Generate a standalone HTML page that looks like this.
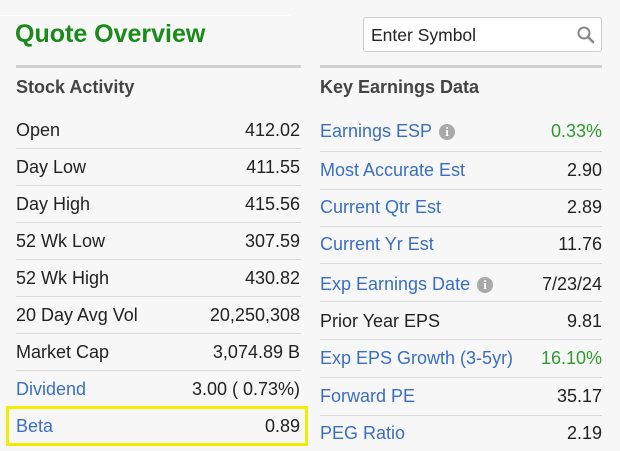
<!DOCTYPE html>
<html><head><style>
body{margin:0;width:620px;height:451px;background:#f7f7f7;font-family:"Liberation Sans",sans-serif;position:relative;overflow:hidden}
.a{position:absolute;white-space:nowrap;font-size:18px;line-height:20px;color:#222}
.l{color:#3a6fc0}
.g{color:#2e9a2e}
.r{text-align:right}
.s{position:absolute;height:1px;background:#d8d8d8}
.i{display:inline-block;width:16px;height:16px;border-radius:50%;background:#a9a9a9;color:#fff;font-size:13px;line-height:16px;text-align:center;font-weight:bold;vertical-align:1px;margin-left:7px;font-family:"Liberation Serif",serif}
</style></head><body>
<div style="position:absolute;left:0;top:15px;width:290px;height:1px;background:#fff"></div>
<div class="a" style="left:15px;top:20px;font-size:25px;line-height:28px;font-weight:bold;color:#1a8a1a">Quote Overview</div>
<div style="position:absolute;left:363px;top:17px;width:237px;height:33px;border:1px solid #ccc;border-radius:3px;background:#fff"></div>
<div class="a" style="left:371px;top:25px;font-size:17.5px;color:#222">Enter Symbol</div>
<svg style="position:absolute;left:576px;top:25px" width="20" height="20" viewBox="0 0 20 20"><circle cx="8" cy="8" r="5.5" fill="none" stroke="#888" stroke-width="2"/><line x1="12" y1="12" x2="17" y2="17" stroke="#888" stroke-width="2.5" stroke-linecap="round"/></svg>
<div style="position:absolute;left:16px;top:65px;width:285px;height:3px;background:#d0d0d0"></div>
<div style="position:absolute;left:320px;top:65px;width:282px;height:3px;background:#d0d0d0"></div>
<div class="a" style="left:16px;top:77px;font-weight:bold;color:#444">Stock Activity</div>
<div class="a" style="left:320px;top:77px;font-weight:bold;color:#444">Key Earnings Data</div>

<div class="a" style="left:16px;top:120px">Open</div><div class="a r" style="right:320px;top:120px">412.02</div>
<div class="a" style="left:16px;top:157px">Day Low</div><div class="a r" style="right:320px;top:157px">411.55</div>
<div class="a" style="left:16px;top:194px">Day High</div><div class="a r" style="right:320px;top:194px">415.56</div>
<div class="a" style="left:16px;top:231px">52 Wk Low</div><div class="a r" style="right:320px;top:231px">307.59</div>
<div class="a" style="left:16px;top:268px">52 Wk High</div><div class="a r" style="right:320px;top:268px">430.82</div>
<div class="a" style="left:16px;top:305px">20 Day Avg Vol</div><div class="a r" style="right:320px;top:305px">20,250,308</div>
<div class="a" style="left:16px;top:342px">Market Cap</div><div class="a r" style="right:320px;top:342px">3,074.89 B</div>
<div class="a l" style="left:16px;top:379px">Dividend</div><div class="a r" style="right:320px;top:379px">3.00 ( 0.73%)</div>
<div class="a l" style="left:16px;top:416px">Beta</div><div class="a r" style="right:320px;top:416px">0.89</div>
<div class="s" style="left:16px;width:285px;top:148px"></div>
<div class="s" style="left:16px;width:285px;top:185px"></div>
<div class="s" style="left:16px;width:285px;top:222px"></div>
<div class="s" style="left:16px;width:285px;top:259px"></div>
<div class="s" style="left:16px;width:285px;top:296px"></div>
<div class="s" style="left:16px;width:285px;top:333px"></div>
<div class="s" style="left:16px;width:285px;top:370px"></div>
<div style="position:absolute;left:6px;top:406px;width:296px;height:34px;border:3px solid #f5eb00"></div>

<div class="a l" style="left:320px;top:121px">Earnings ESP<span class="i">i</span></div><div class="a r g" style="right:18px;top:121px">0.33%</div>
<div class="a l" style="left:320px;top:160px">Most Accurate Est</div><div class="a r" style="right:18px;top:160px">2.90</div>
<div class="a l" style="left:320px;top:197px">Current Qtr Est</div><div class="a r" style="right:18px;top:197px">2.89</div>
<div class="a l" style="left:320px;top:234px">Current Yr Est</div><div class="a r" style="right:18px;top:234px">11.76</div>
<div class="a l" style="left:320px;top:274px">Exp Earnings Date<span class="i">i</span></div><div class="a r" style="right:18px;top:274px">7/23/24</div>
<div class="a" style="left:320px;top:311px">Prior Year EPS</div><div class="a r" style="right:18px;top:311px">9.81</div>
<div class="a l" style="left:320px;top:348px">Exp EPS Growth (3-5yr)</div><div class="a r g" style="right:18px;top:348px">16.10%</div>
<div class="a l" style="left:320px;top:386px">Forward PE</div><div class="a r" style="right:18px;top:386px">35.17</div>
<div class="a l" style="left:320px;top:423px">PEG Ratio</div><div class="a r" style="right:18px;top:423px">2.19</div>
<div class="s" style="left:320px;width:282px;top:151px"></div>
<div class="s" style="left:320px;width:282px;top:189px"></div>
<div class="s" style="left:320px;width:282px;top:226px"></div>
<div class="s" style="left:320px;width:282px;top:263px"></div>
<div class="s" style="left:320px;width:282px;top:301px"></div>
<div class="s" style="left:320px;width:282px;top:339px"></div>
<div class="s" style="left:320px;width:282px;top:377px"></div>
<div class="s" style="left:320px;width:282px;top:415px"></div>
</body></html>
